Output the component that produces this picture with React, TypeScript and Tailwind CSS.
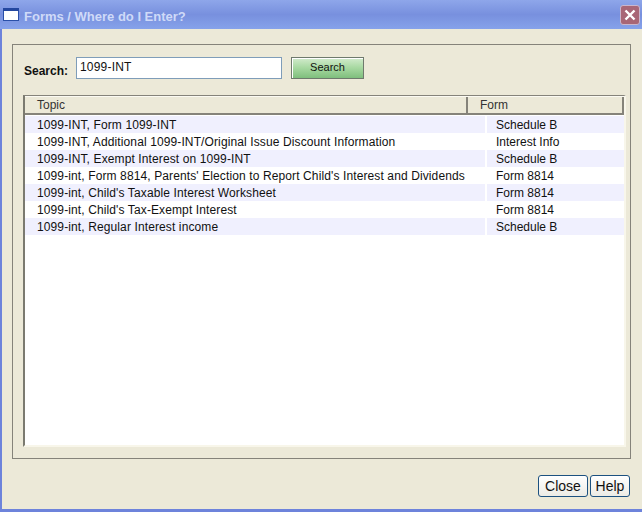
const rows = [
  ["1099-INT, Form 1099-INT", "Schedule B"],
  ["1099-INT, Additional 1099-INT/Original Issue Discount Information", "Interest Info"],
  ["1099-INT, Exempt Interest on 1099-INT", "Schedule B"],
  ["1099-int, Form 8814, Parents' Election to Report Child's Interest and Dividends", "Form 8814"],
  ["1099-int, Child's Taxable Interest Worksheet", "Form 8814"],
  ["1099-int, Child's Tax-Exempt Interest", "Form 8814"],
  ["1099-int, Regular Interest income", "Schedule B"],
];

export default function App() {
  return (
    <div className="flex h-[512px] w-[642px] flex-col overflow-hidden bg-[#6d83db] font-['Liberation_Sans',sans-serif] text-[12px] text-[#111]">
      {/* title bar */}
      <div className="flex h-[29px] shrink-0 items-center bg-gradient-to-b from-[#8ea6ea] via-[#7890de] to-[#86a2ea] pl-[3px] pr-[2px]">
        <svg width="16" height="13" viewBox="0 0 16 13" className="shrink-0">
          <rect x="0.5" y="0.5" width="15" height="12" fill="#fff" stroke="#2a4fa8" />
          <rect x="0" y="0" width="16" height="3" fill="#24479f" />
        </svg>
        <span className="ml-[5px] mt-[4px] text-[13px] font-bold text-[#cfdaf8]">Forms / Where do I Enter?</span>
        <div className="ml-auto flex h-[20px] w-[20px] items-center justify-center rounded-[3px] border border-[#c9b6cc] bg-[#a86676]">
          <svg width="12" height="12" viewBox="0 0 12 12">
            <path d="M1.5 1.5 10.5 10.5M10.5 1.5 1.5 10.5" stroke="#fff" strokeWidth="2.4" />
          </svg>
        </div>
      </div>

      {/* window body */}
      <div className="mb-[3px] ml-[2px] flex min-h-0 flex-1 flex-col bg-[#ece9d8] pl-[10px] pr-[11px] pt-[15px]">
        <div className="flex h-[415px] shrink-0 flex-col border border-[#85837a] pl-[10px] pr-[4px] pt-[11px]">
          <div className="flex h-[23px] items-center">
            <span className="ml-[1px] mt-[7px] w-[52px] font-bold">Search:</span>
            <input
              readOnly
              value="1099-INT"
              className="h-[22px] w-[206px] border border-[#7f9db9] bg-white px-[3px] pb-[2px] text-[12px] tracking-[0.2px] outline-none"
            />
            <button className="ml-[9px] h-[22px] w-[73px] border border-[#6f7a6d] bg-gradient-to-b from-[#d2ebcd] via-[#a6d8a0] to-[#7fbf7d] text-[11px] shadow-[inset_1px_1px_0_#fff]">
              Search
            </button>
          </div>

          {/* topic table */}
          <div className="mt-[16px] flex h-[352px] flex-col border-l-2 border-t border-r-2 border-b-2 border-l-[#7b7a70] border-t-[#85837a] border-r-[#f8f6ea] border-b-[#f8f6ea] bg-white">
            <div className="mb-[1px] flex h-[19px] shrink-0 border-b-2 border-b-[#85837a] border-t border-t-[#fbfaf2] bg-[#ece9d8] text-[12px] text-[#333]">
              <div className="w-[443px] border-r-2 border-r-[#85837a] pl-[12px] leading-[16px]">Topic</div>
              <div className="flex-1 border-r-2 border-r-[#85837a] pl-[12px] leading-[17px]">Form</div>
            </div>
            {rows.map(([topic, form], i) => (
              <div key={topic} className={`flex h-[17px] shrink-0 leading-[19px] ${i % 2 === 0 ? "bg-[#f0f0fe]" : "bg-white"}`}>
                <div className="h-[17px] w-[460px] overflow-hidden whitespace-nowrap pl-[12px] tracking-[0.115px]">{topic}</div>
                <div className="h-[17px] flex-1 border-l-2 border-l-white pl-[9px]">{form}</div>
              </div>
            ))}
          </div>
        </div>

        <div className="mt-[16px] flex justify-end gap-[2px] pr-[1px]">
          <button className="h-[22px] w-[50px] rounded-[3px] border border-[#1c5180] bg-gradient-to-b from-white to-[#ecebe5] text-[14px]">Close</button>
          <button className="h-[22px] w-[40px] rounded-[3px] border border-[#1c5180] bg-gradient-to-b from-white to-[#ecebe5] text-[14px]">Help</button>
        </div>
      </div>
    </div>
  );
}
